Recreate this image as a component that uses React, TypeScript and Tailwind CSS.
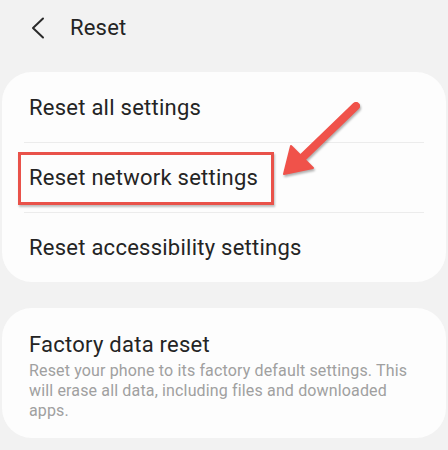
import React from "react";

const rows = ["Reset all settings", "Reset network settings", "Reset accessibility settings"];

const App: React.FC = () => {
  return (
    <div className="relative w-[448px] h-[450px] overflow-hidden bg-[#f2f2f2] font-['Roboto','Liberation_Sans',sans-serif] text-[#242424]">
      {/* header */}
      <div className="flex items-center h-[56px] pl-[30px]">
        <svg width="16" height="22" viewBox="0 0 16 22" className="mr-[24px]">
          <path d="M13 1.5 L3 11 L13 20.5" fill="none" stroke="#2a2a2a" strokeWidth="2" strokeLinecap="round" strokeLinejoin="round" />
        </svg>
        <span className="text-[22px] leading-none tracking-[0.2px]">Reset</span>
      </div>

      {/* reset options */}
      <div className="mx-[2px] mt-[16px] rounded-[30px] bg-[#fdfdfd] px-[22px]">
        {rows.map((label, i) => (
          <div
            key={label}
            className={`flex items-center h-[70px] pl-[5px] text-[22px] tracking-[0.25px] ${i > 0 ? "border-t border-[#ececec]" : ""}`}
          >
            {label}
          </div>
        ))}
      </div>

      {/* factory reset */}
      <div className="mx-[2px] mt-[26px] rounded-[30px] bg-[#fdfdfd] pl-[27px] pr-[24px] pt-[24px] pb-[17px]">
        <div className="text-[22px] leading-[26px] tracking-[0.25px]">Factory data reset</div>
        <p className="mt-[3px] text-[16px] leading-[20px] tracking-[0.15px] text-[#a0a0a0]">
          Reset your phone to its factory default settings. This will erase all data, including files and downloaded apps.
        </p>
      </div>

      {/* annotation box */}
      <div className="absolute left-[18px] top-[152px] w-[256px] h-[53px] border-[3px] border-[#e9524a] shadow-[1px_2px_2px_rgba(0,0,0,0.25)]" />

      {/* annotation arrow */}
      <svg className="absolute left-0 top-0 drop-shadow-[1px_2px_1px_rgba(0,0,0,0.3)]" width="448" height="450" viewBox="0 0 448 450">
        <line x1="356" y1="106" x2="300" y2="160" stroke="#f0524a" strokeWidth="8" strokeLinecap="round" />
        <polygon points="291,146 284,174 313,168" fill="#f0524a" stroke="#f0524a" strokeWidth="2" strokeLinejoin="round" />
      </svg>
    </div>
  );
};

export default App;
